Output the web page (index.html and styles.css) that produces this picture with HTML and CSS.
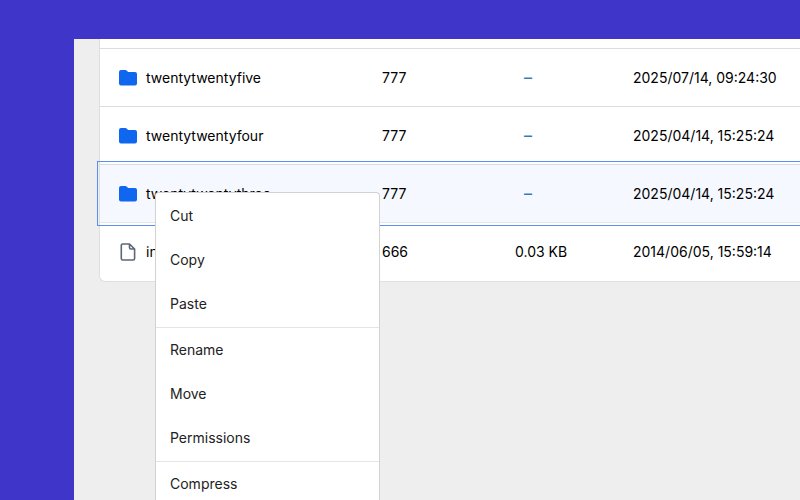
FILE: index.html
```
<!DOCTYPE html>
<html lang="en">
<head>
<meta charset="utf-8">
<meta name="viewport" content="width=device-width, initial-scale=1">
<title>File Manager</title>
<link rel="stylesheet" href="styles.css">
</head>
<body>
<svg class="sprite" aria-hidden="true">
  <symbol id="folder" viewBox="0 0 18 16">
    <path d="M2 0h4.400c.5 0 .9.200 1.200.5L9.100 2H16a2 2 0 0 1 2 2v9.500a2 2 0 0 1-2 2H2a2 2 0 0 1-2-2V2a2 2 0 0 1 2-2z"/>
  </symbol>
  <symbol id="file" viewBox="0 0 18 18">
    <path d="M3.800 1h6.700L15.600 6v9.500A1.500 1.500 0 0 1 14.100 17H3.800a1.500 1.500 0 0 1-1.500-1.500v-13A1.500 1.500 0 0 1 3.800 1zM10.500 1v3.600A1.400 1.400 0 0 0 11.900 6h3.700"/>
  </symbol>
</svg>
<main class="window">
  <div class="card">
    <table class="files">
      <colgroup>
        <col class="col-name"><col class="col-mode"><col class="col-size"><col>
      </colgroup>
      <tbody>
        <tr>
          <td><span class="entry"><svg class="icon folder"><use href="#folder"/></svg>twentytwentyfive</span></td>
          <td>777</td>
          <td><a class="measure" href="#">–</a></td>
          <td>2025/07/14, 09:24:30</td>
        </tr>
        <tr>
          <td><span class="entry"><svg class="icon folder"><use href="#folder"/></svg>twentytwentyfour</span></td>
          <td>777</td>
          <td><a class="measure" href="#">–</a></td>
          <td>2025/04/14, 15:25:24</td>
        </tr>
        <tr class="selected">
          <td><span class="entry"><svg class="icon folder"><use href="#folder"/></svg>twentytwentythree</span></td>
          <td>777</td>
          <td><a class="measure" href="#">–</a></td>
          <td>2025/04/14, 15:25:24</td>
        </tr>
        <tr>
          <td><span class="entry"><svg class="icon file"><use href="#file"/></svg>index.php</span></td>
          <td>666</td>
          <td>0.03 KB</td>
          <td>2014/06/05, 15:59:14</td>
        </tr>
      </tbody>
    </table>
  </div>
</main>
<div class="menu">
  <div class="group">
    <button type="button">Cut</button>
    <button type="button">Copy</button>
    <button type="button">Paste</button>
  </div>
  <div class="group">
    <button type="button">Rename</button>
    <button type="button">Move</button>
    <button type="button">Permissions</button>
  </div>
  <div class="group">
    <button type="button">Compress</button>
  </div>
</div>
</body>
</html>
```
FILE: styles.css
```
* {
  box-sizing: border-box;
}

body {
  margin: 0;
  min-height: 100vh;
  display: flex;
  padding: 39px 0 0 74px;
  overflow: hidden;
  background: #3f36c9;
  color: #000;
  font: 14px/20px Inter, "Liberation Sans", sans-serif;
}

.sprite {
  position: absolute;
  width: 0;
  height: 0;
}

.window {
  flex: 1;
  padding-left: 25px;
  background: #eee;
}

.card {
  padding-top: 9px;
  background: #fff;
  border: solid #dfdfdf;
  border-width: 0 0 1px 1px;
  border-bottom-left-radius: 6px;
}

.files {
  width: 100%;
  table-layout: fixed;
  border-spacing: 0;
}

.col-name {
  width: 282px;
}

.col-mode {
  width: 133px;
}

.col-size {
  width: 118px;
}

td {
  height: 58px;
  padding: 0;
  border-top: 1px solid #dcdcdc;
  white-space: nowrap;
}

.selected {
  background: #f5f8ff;
  outline: 1px solid #5b8df6;
  outline-offset: 2px;
}

.selected td {
  height: 59px;
  border-bottom: 1px solid #e4e6ea;
}

.selected + tr td {
  border-top: 0;
}

.entry {
  display: flex;
  align-items: center;
  gap: 9px;
  padding-left: 19px;
}

.icon {
  width: 18px;
}

.folder {
  height: 16px;
  fill: #0f67f0;
}

.file {
  height: 18px;
  fill: none;
  stroke: #5d6675;
  stroke-width: 1.600;
  stroke-linejoin: round;
}

.measure {
  padding-left: 9px;
  color: #337ab7;
  font-size: 16px;
  font-weight: 500;
  text-decoration: none;
}

.menu {
  position: absolute;
  top: 192px;
  left: 155px;
  width: 225px;
  height: calc(100vh - 192px);
  padding-top: 1px;
  overflow: hidden;
  background: #fff;
  border: solid #d2d2d2;
  border-width: 1px 1px 0;
  border-radius: 4px 4px 0 0;
}

.group {
  padding-bottom: 1px;
  border-bottom: 1px solid #e4e4e4;
}

.group button {
  display: block;
  width: 100%;
  height: 44px;
  padding: 0 14px;
  border: 0;
  background: none;
  color: #222;
  font: inherit;
  text-align: left;
}
```
